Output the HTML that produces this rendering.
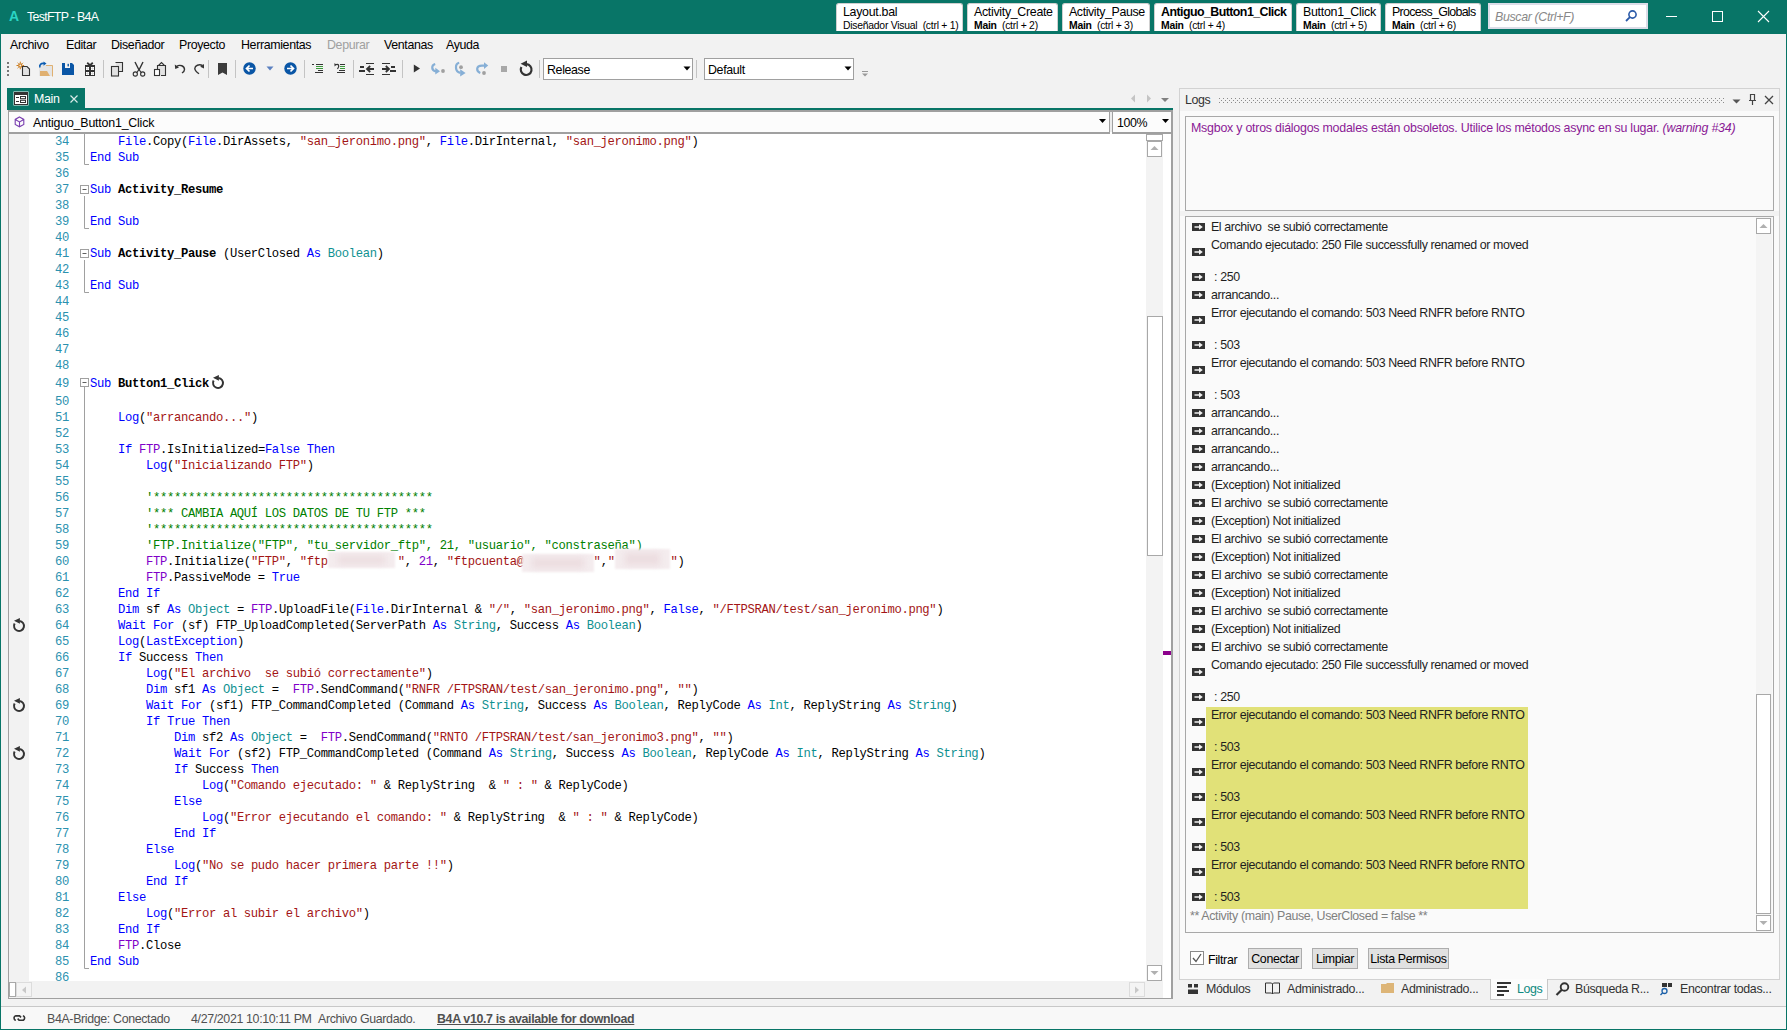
<!DOCTYPE html><html><head><meta charset="utf-8"><style>
*{box-sizing:border-box}
html,body{margin:0;padding:0}
body{width:1787px;height:1030px;overflow:hidden;position:relative;background:#f2f2f2;font-family:"Liberation Sans",sans-serif;font-size:12.4px;letter-spacing:-0.35px;color:#000}
.a{position:absolute}
.ln{position:absolute;left:29px;width:40px;text-align:right;font-family:"Liberation Mono",monospace;font-size:12.2px;letter-spacing:-0.32px;color:#2b91af;white-space:pre}
.cl{position:absolute;left:90px;font-family:"Liberation Mono",monospace;font-size:12.2px;letter-spacing:-0.32px;color:#000;white-space:pre}
i{font-style:normal}
.k{color:#0000ff} .t{color:#0f9191} .s{color:#a31515} .c{color:#008000} .o{color:#8000c8} .b{font-weight:bold}
.tt{position:absolute;background:#fff;border:1px solid #cfcfcf;border-bottom:none;border-radius:3px 3px 0 0;top:3px;height:28px;padding:0 0 0 6px;white-space:pre}
.tt .n{position:absolute;left:6px;top:1px;line-height:14px}
.tt .d{position:absolute;left:6px;top:16px;font-size:10.4px;letter-spacing:-0.25px;line-height:12px}
.mi{position:absolute;top:38px;line-height:15px}
.sep{position:absolute;top:60px;width:1px;height:20px;background:#c8c8c8}
</style></head><body>
<div class="a" style="left:0;top:0;width:1787px;height:34px;background:#087567"></div>
<div class="a" style="left:0;top:0;width:1px;height:1030px;background:#087567"></div>
<div class="a" style="left:1786px;top:0;width:1px;height:1030px;background:#087567"></div>
<div class="a" style="left:0;top:1029px;width:1787px;height:1px;background:#087567"></div>
<div class="a" style="left:9px;top:8px;font-size:14px;font-weight:bold;color:#2ad4c4;line-height:16px">A</div>
<div class="a" style="left:27px;top:10px;letter-spacing:-0.7px;color:#fff;line-height:14px">TestFTP - B4A</div>
<div class="tt" style="left:836px;width:127px"><div class="n" style="letter-spacing:-0.29px">Layout.bal</div><div class="d">Diseñador Visual  (ctrl + 1)</div></div>
<div class="tt" style="left:967px;width:91px"><div class="n" style="letter-spacing:-0.31px">Activity_Create</div><div class="d"><b>Main</b>  (ctrl + 2)</div></div>
<div class="tt" style="left:1062px;width:88px"><div class="n" style="letter-spacing:-0.4px">Activity_Pause</div><div class="d"><b>Main</b>  (ctrl + 3)</div></div>
<div class="tt" style="left:1154px;width:138px"><div class="n" style="font-weight:bold;letter-spacing:-0.55px">Antiguo_Button1_Click</div><div class="d"><b>Main</b>  (ctrl + 4)</div></div>
<div class="tt" style="left:1296px;width:85px"><div class="n" style="letter-spacing:-0.28px">Button1_Click</div><div class="d"><b>Main</b>  (ctrl + 5)</div></div>
<div class="tt" style="left:1385px;width:96px"><div class="n" style="letter-spacing:-0.68px">Process_Globals</div><div class="d"><b>Main</b>  (ctrl + 6)</div></div>
<div class="a" style="left:1488px;top:3px;width:160px;height:26px;background:#fff;border:2px solid #dcdde8"></div>
<div class="a" style="left:1495px;top:10px;font-style:italic;color:#888;line-height:14px">Buscar (Ctrl+F)</div>
<svg class="a" style="left:1624px;top:9px" width="14" height="14" viewBox="0 0 14 14"><circle cx="8.5" cy="5.5" r="3.6" fill="none" stroke="#2b5aa8" stroke-width="1.6"/><line x1="5.9" y1="8.1" x2="2" y2="12" stroke="#2b5aa8" stroke-width="1.8"/></svg>
<div class="a" style="left:1666px;top:16px;width:11px;height:1px;background:#fff"></div>
<div class="a" style="left:1712px;top:11px;width:11px;height:11px;border:1px solid #fff"></div>
<svg class="a" style="left:1757px;top:10px" width="13" height="13" viewBox="0 0 13 13"><path d="M1 1L12 12M12 1L1 12" stroke="#fff" stroke-width="1.1"/></svg>
<div class="mi" style="left:10px;color:#000">Archivo</div>
<div class="mi" style="left:66px;color:#000">Editar</div>
<div class="mi" style="left:111px;color:#000">Diseñador</div>
<div class="mi" style="left:179px;color:#000">Proyecto</div>
<div class="mi" style="left:241px;color:#000">Herramientas</div>
<div class="mi" style="left:327px;color:#a0a0a0">Depurar</div>
<div class="mi" style="left:384px;color:#000">Ventanas</div>
<div class="mi" style="left:446px;color:#000">Ayuda</div>
<svg class="a" style="left:7px;top:62px" width="2" height="14" viewBox="0 0 2 14"><rect x="0" y="0" width="2" height="2" fill="#777"/><rect x="0" y="4" width="2" height="2" fill="#777"/><rect x="0" y="8" width="2" height="2" fill="#777"/><rect x="0" y="12" width="2" height="2" fill="#777"/></svg>
<div class="a" style="left:103px;top:60px;width:1px;height:18px;background:#c4c4c4"></div>
<div class="a" style="left:208px;top:60px;width:1px;height:18px;background:#c4c4c4"></div>
<div class="a" style="left:235px;top:60px;width:1px;height:18px;background:#c4c4c4"></div>
<div class="a" style="left:304px;top:60px;width:1px;height:18px;background:#c4c4c4"></div>
<div class="a" style="left:353px;top:60px;width:1px;height:18px;background:#c4c4c4"></div>
<div class="a" style="left:402px;top:60px;width:1px;height:18px;background:#c4c4c4"></div>
<div class="a" style="left:539px;top:60px;width:1px;height:18px;background:#c4c4c4"></div>
<div class="a" style="left:696px;top:60px;width:1px;height:18px;background:#c4c4c4"></div>
<svg class="a" style="left:16px;top:58px" width="16" height="18" viewBox="0 0 16 18"><g transform="translate(0.3,3.5)"><circle cx="4" cy="4" r="1.6" fill="none" stroke="#cc7a1a" stroke-width="1.2"/><line x1="6.3" y1="4.0" x2="7.8" y2="4.0" stroke="#cc7a1a" stroke-width="1"/><line x1="1.7000000000000002" y1="4.0" x2="0.20000000000000018" y2="4.0" stroke="#cc7a1a" stroke-width="1"/><line x1="4.0" y1="6.3" x2="4.0" y2="7.8" stroke="#cc7a1a" stroke-width="1"/><line x1="4.0" y1="1.7000000000000002" x2="4.0" y2="0.20000000000000018" stroke="#cc7a1a" stroke-width="1"/><line x1="5.609999999999999" y1="5.609999999999999" x2="6.66" y2="6.66" stroke="#cc7a1a" stroke-width="1"/><line x1="2.39" y1="5.609999999999999" x2="1.3400000000000003" y2="6.66" stroke="#cc7a1a" stroke-width="1"/><line x1="5.609999999999999" y1="2.39" x2="6.66" y2="1.3400000000000003" stroke="#cc7a1a" stroke-width="1"/><line x1="2.39" y1="2.39" x2="1.3400000000000003" y2="1.3400000000000003" stroke="#cc7a1a" stroke-width="1"/></g><g transform="translate(16,0)"></g><path d="M6.5 8.5H11L13.5 11V17.5H6.5Z" fill="#e2e2e2" stroke="#333" stroke-width="1.1"/></svg>
<svg class="a" style="left:38px;top:61px" width="16" height="16" viewBox="0 0 16 16"><rect x="1" y="4" width="14" height="11" fill="#e4e4e4"/><path d="M8 4.5H14.5V15.5" fill="none" stroke="#e0b070" stroke-width="1"/><path d="M2 10H9L12 15H2Z" fill="#e0b070"/><path d="M2 6.5C1 4 3 2 6 2.5" fill="none" stroke="#0a5bb0" stroke-width="1.6"/><path d="M5.5 0.5L8.5 2.5L5.5 4.8Z" fill="#0a5bb0"/></svg>
<svg class="a" style="left:62px;top:63px" width="12" height="12" viewBox="0 0 12 12"><path d="M0 0H10L12 2V12H0Z" fill="#0a56a6"/><rect x="3" y="0" width="5" height="5" fill="#f4f4f4"/><rect x="5.5" y="0.8" width="1.4" height="2.6" fill="#0a56a6"/></svg>
<svg class="a" style="left:85px;top:62px" width="10" height="14" viewBox="0 0 10 14"><path d="M2.2 0.8L5 3.2L7.8 0.8" fill="none" stroke="#333" stroke-width="1.8"/><rect x="0" y="3" width="10" height="11" fill="#333"/><rect x="1" y="5" width="3" height="3" fill="#fff"/><rect x="6" y="5" width="3" height="3" fill="#fff"/><rect x="1" y="10" width="3" height="3" fill="#fff"/><rect x="6" y="10" width="3" height="3" fill="#fff"/><path d="M1 6.5H4M2.5 5V8M6 6.5H9M7.5 5V8M1 11.5H4M2.5 10V13M6 11.5H9M7.5 10V13" stroke="#ccc" stroke-width="0.6"/></svg>
<svg class="a" style="left:110px;top:61px" width="15" height="16" viewBox="0 0 15 16"><path d="M5.5 1.5H12.5V10.5H8" fill="#e2e2e2" stroke="#333" stroke-width="1.1"/><rect x="1.5" y="5.5" width="7" height="9.5" fill="#e2e2e2" stroke="#333" stroke-width="1.1"/></svg>
<svg class="a" style="left:132px;top:61px" width="14" height="16" viewBox="0 0 14 16"><path d="M3 1L7 9L11 1" fill="none" stroke="#333" stroke-width="1.4"/><path d="M4.5 12L7 8.5L9.5 12" fill="none" stroke="#333" stroke-width="1.1"/><circle cx="3.3" cy="13" r="2.1" fill="none" stroke="#333" stroke-width="1.1"/><circle cx="10.7" cy="13" r="2.1" fill="none" stroke="#333" stroke-width="1.1"/></svg>
<svg class="a" style="left:153px;top:61px" width="14" height="16" viewBox="0 0 14 16"><path d="M4.5 13.5V4.5H12.5V14.5H8" fill="#e2e2e2" stroke="#333" stroke-width="1.1"/><path d="M5.5 4.5L8.5 1.5L11.5 4.5" fill="none" stroke="#333" stroke-width="1.1"/><rect x="1.5" y="8.5" width="5" height="6" fill="#fff" stroke="#333" stroke-width="1.1"/></svg>
<svg class="a" style="left:174px;top:63px" width="12" height="11" viewBox="0 0 12 11"><path d="M2.5 3.5C6 1 10.5 3 10.5 6.5C10.5 8 9.5 9 8 10" fill="none" stroke="#333" stroke-width="1.4"/><path d="M0.8 1.5L1.2 6L5 4.5Z" fill="#333"/></svg>
<svg class="a" style="left:193px;top:63px" width="12" height="12" viewBox="0 0 12 12"><path d="M9.5 2.5C6 0.8 2 2.5 1.8 5.5C1.8 7.5 3.5 9 6 10.8" fill="none" stroke="#333" stroke-width="1.4"/><path d="M11 1L11 5.5L7.2 3.8Z" fill="#333"/></svg>
<svg class="a" style="left:218px;top:63px" width="9" height="13" viewBox="0 0 9 13"><path d="M0 0H9V12L4.5 9.5L0 12Z" fill="#3c3c3c"/></svg>
<svg class="a" style="left:243px;top:62px" width="13" height="13" viewBox="0 0 13 13"><circle cx="6.5" cy="6.5" r="6.2" fill="#0a56a6"/><path d="M10 6.5H4 M6.5 3.5L3.5 6.5L6.5 9.5" fill="none" stroke="#fff" stroke-width="1.7"/></svg>
<svg class="a" style="left:266px;top:66px" width="8" height="5" viewBox="0 0 8 5"><path d="M0.5 0.5H7.5L4 4.5Z" fill="#5b80c0"/></svg>
<svg class="a" style="left:284px;top:62px" width="13" height="13" viewBox="0 0 13 13"><circle cx="6.5" cy="6.5" r="6.2" fill="#0a56a6"/><path d="M3 6.5H9 M6.5 3.5L9.5 6.5L6.5 9.5" fill="none" stroke="#fff" stroke-width="1.7"/></svg>
<svg class="a" style="left:312px;top:63px" width="12" height="11" viewBox="0 0 12 11"><rect x="0" y="1" width="2" height="1" fill="#333"/><rect x="4" y="1" width="7" height="1" fill="#333"/><rect x="4" y="3" width="7" height="1" fill="#3a9a3a"/><rect x="4" y="5" width="7" height="1" fill="#3a9a3a"/><rect x="6" y="7" width="5" height="1" fill="#333"/><rect x="3" y="9" width="8" height="1" fill="#333"/></svg>
<svg class="a" style="left:334px;top:63px" width="12" height="11" viewBox="0 0 12 11"><path d="M1.5 1.8C4.5 0.5 6 2.5 3.5 6" fill="none" stroke="#333" stroke-width="1.2"/><path d="M0.3 0.3L0.6 3.4L2.8 1.5Z" fill="#333"/><rect x="6" y="1" width="5" height="1" fill="#333"/><rect x="6" y="3" width="5" height="1" fill="#3a9a3a"/><rect x="6" y="5" width="5" height="1" fill="#3a9a3a"/><rect x="5" y="7" width="6" height="1" fill="#333"/><rect x="3" y="9" width="8" height="1" fill="#333"/></svg>
<svg class="a" style="left:359px;top:62px" width="16" height="14" viewBox="0 0 16 14"><rect x="7" y="1" width="8" height="1" fill="#333"/><rect x="1" y="4" width="4" height="2" fill="#333"/><rect x="0" y="8" width="6" height="2" fill="#333"/><path d="M15 7H8.5 M11.2 4L8 7L11.2 10" fill="none" stroke="#333" stroke-width="1.8"/><rect x="7" y="12" width="8" height="1" fill="#333"/></svg>
<svg class="a" style="left:381px;top:62px" width="16" height="14" viewBox="0 0 16 14"><rect x="1" y="1" width="8" height="1" fill="#333"/><rect x="10" y="4" width="4" height="2" fill="#333"/><rect x="9" y="8" width="6" height="2" fill="#333"/><path d="M1 7H7.5 M4.8 4L8 7L4.8 10" fill="none" stroke="#333" stroke-width="1.8"/><rect x="1" y="12" width="8" height="1" fill="#333"/></svg>
<svg class="a" style="left:413px;top:64px" width="8" height="9" viewBox="0 0 8 9"><path d="M0.8 0.5L7 4.5L0.8 8.5Z" fill="#333"/></svg>
<svg class="a" style="left:430px;top:62px" width="16" height="14" viewBox="0 0 16 14"><path d="M5.2 2C1.2 3.2 1 8.8 6.2 9.3" fill="none" stroke="#86afd6" stroke-width="2.2"/><path d="M5.3 5.8L10 9.2L5.3 12.6Z" fill="#86afd6"/><circle cx="13" cy="9" r="1.9" fill="#a0a0a0"/></svg>
<svg class="a" style="left:454px;top:61px" width="14" height="17" viewBox="0 0 14 17"><path d="M5.2 1.8C0.8 2.8 0.6 11 6.5 11.8" fill="none" stroke="#86afd6" stroke-width="2.2"/><path d="M6.2 8.3L11.6 11.9L6.2 15.5Z" fill="#86afd6"/><circle cx="7" cy="6.2" r="1.9" fill="#a0a0a0"/></svg>
<svg class="a" style="left:475px;top:62px" width="15" height="14" viewBox="0 0 15 14"><path d="M5.3 11C1 9.5 0.8 3.6 7 3.6H9.5" fill="none" stroke="#86afd6" stroke-width="2.2"/><path d="M9 0.2L13.2 3.6L9 7Z" fill="#86afd6"/><circle cx="9" cy="11" r="1.9" fill="#a0a0a0"/></svg>
<div class="a" style="left:501px;top:66px;width:6px;height:6px;background:#a8a8a8"></div>
<svg class="a" style="left:518px;top:60px" width="16" height="17" viewBox="0 0 16 17"><path d="M3.4 7A5.4 5.4 0 1 0 8.5 4.2" fill="none" stroke="#333" stroke-width="2.2"/><path d="M2.6 3.8L9 0.6L9 7Z" fill="#333"/></svg>
<div class="a" style="left:543px;top:58px;width:150px;height:22px;background:#fff;border:1px solid #a0a0a0"></div>
<div class="a" style="left:547px;top:63px;line-height:14px">Release</div>
<svg class="a" style="left:683px;top:66px" width="8" height="5" viewBox="0 0 8 5"><path d="M0.5 0.5H7.5L4 4.5Z" fill="#000"/></svg>
<div class="a" style="left:704px;top:58px;width:150px;height:22px;background:#fff;border:1px solid #a0a0a0"></div>
<div class="a" style="left:708px;top:63px;line-height:14px">Default</div>
<svg class="a" style="left:844px;top:66px" width="8" height="5" viewBox="0 0 8 5"><path d="M0.5 0.5H7.5L4 4.5Z" fill="#000"/></svg>
<svg class="a" style="left:861px;top:71px" width="8" height="6" viewBox="0 0 8 6"><rect x="1" y="0" width="6" height="1" fill="#999"/><path d="M1 2.5H7L4 5.5Z" fill="#999"/></svg>
<div class="a" style="left:7px;top:88px;width:78px;height:20px;background:#087567"></div>
<svg class="a" style="left:13px;top:91px" width="16" height="15" viewBox="0 0 16 15"><rect x="0.5" y="0.5" width="15" height="14" fill="#fff"/><rect x="1.5" y="1.5" width="13" height="12" fill="#fff" stroke="#333" stroke-width="1"/><rect x="2" y="2" width="12" height="2" fill="#333"/><rect x="3" y="6" width="3" height="1" fill="#333"/><rect x="3" y="10" width="3" height="1" fill="#333"/><rect x="7.5" y="5.5" width="5" height="2.2" fill="none" stroke="#333" stroke-width="1"/><rect x="7.5" y="9.3" width="5" height="2.2" fill="none" stroke="#333" stroke-width="1"/></svg>
<div class="a" style="left:34px;top:92px;color:#fff;line-height:15px">Main</div>
<svg class="a" style="left:70px;top:95px" width="8" height="8" viewBox="0 0 8 8"><path d="M0.5 0.5L7.5 7.5M7.5 0.5L0.5 7.5" stroke="#d8ebe8" stroke-width="1.2"/></svg>
<div class="a" style="left:7px;top:108px;width:1166px;height:2px;background:#087567"></div>
<svg class="a" style="left:1128px;top:93px" width="46" height="12" viewBox="0 0 46 12"><path d="M7 1.5L3 5.5L7 9.5Z" fill="#c4c4c4"/><path d="M19 1.5L23 5.5L19 9.5Z" fill="#c4c4c4"/><path d="M33 5L41 5L37 9Z" fill="#808080"/></svg>
<div class="a" style="left:8px;top:110px;width:1165px;height:889px;border:1px solid #a0a0a0;border-right-width:2px;border-top-width:2px;background:#fff"></div>
<div class="a" style="left:9px;top:112px;width:1101px;height:22px;background:#fcfcfc;border-bottom:2px solid #a0a0a0;border-right:1px solid #a0a0a0"></div>
<div class="a" style="left:1110px;top:112px;width:2px;height:20px;background:#ececec"></div>
<div class="a" style="left:1112px;top:112px;width:59px;height:22px;background:#fcfcfc;border-left:1px solid #a0a0a0;border-bottom:2px solid #a0a0a0"></div>
<svg class="a" style="left:14px;top:116px" width="12" height="12" viewBox="0 0 12 12"><path d="M5.5 1L9.8 3.4L9.8 8.4L5.5 10.8L1.2 8.4L1.2 3.4Z M1.2 3.4L5.5 5.9L9.8 3.4 M5.5 5.9L5.5 10.8" fill="none" stroke="#7a3fb0" stroke-width="1.1"/></svg>
<div class="a" style="left:33px;top:115.5px;letter-spacing:-0.2px;line-height:15px">Antiguo_Button1_Click</div>
<svg class="a" style="left:1099px;top:119px" width="8" height="5" viewBox="0 0 8 5"><path d="M0 0H7L3.5 4Z" fill="#000"/></svg>
<div class="a" style="left:1117px;top:116px;line-height:14px">100%</div>
<svg class="a" style="left:1162px;top:119px" width="8" height="5" viewBox="0 0 8 5"><path d="M0 0H7L3.5 4Z" fill="#000"/></svg>
<div class="a" style="left:9px;top:134px;width:20px;height:847px;background:#f2f2f2"></div>
<div class="a" style="left:1146px;top:134px;width:17px;height:847px;background:#f3f3f3"></div>
<div class="a" style="left:1146px;top:134px;width:17px;height:7px;background:#fff;border:1px solid #a8a8a8"></div>
<div class="a" style="left:1147px;top:141px;width:15px;height:16px;background:#fff;border:1px solid #a8a8a8"></div>
<svg class="a" style="left:1150px;top:145px" width="9" height="6" viewBox="0 0 9 6"><path d="M0.5 5H8.5L4.5 1Z" fill="#b0b0b0"/></svg>
<div class="a" style="left:1147px;top:316px;width:16px;height:240px;background:#fff;border:1px solid #a8a8a8"></div>
<div class="a" style="left:1147px;top:965px;width:15px;height:16px;background:#fff;border:1px solid #a8a8a8"></div>
<svg class="a" style="left:1150px;top:970px" width="9" height="6" viewBox="0 0 9 6"><path d="M0.5 1H8.5L4.5 5Z" fill="#b0b0b0"/></svg>
<div class="a" style="left:1163px;top:651px;width:8px;height:4px;background:#8b008b"></div>
<div class="a" style="left:9px;top:981px;width:1154px;height:17px;background:#f2f2f2"></div>
<div class="a" style="left:9px;top:982px;width:7px;height:15px;background:#fff;border:1px solid #a8a8a8"></div>
<div class="a" style="left:16px;top:982px;width:16px;height:15px;background:#f4f4f4;border:1px solid #dcdcdc"></div>
<svg class="a" style="left:21px;top:986px" width="6" height="8" viewBox="0 0 6 8"><path d="M5 0.5V7.5L1 4Z" fill="#c8c8c8"/></svg>
<div class="a" style="left:1129px;top:982px;width:16px;height:15px;background:#f4f4f4;border:1px solid #dcdcdc"></div>
<svg class="a" style="left:1134px;top:986px" width="6" height="8" viewBox="0 0 6 8"><path d="M1 0.5V7.5L5 4Z" fill="#c8c8c8"/></svg>
<svg class="a" style="left:78px;top:133px" width="14" height="848" viewBox="0 0 14 848">



<path d="M6.5 0V31.5H11" fill="none" stroke="#a0a0a0" stroke-width="1"/><path d="M6.5 63V95.5H11" fill="none" stroke="#a0a0a0" stroke-width="1"/><path d="M6.5 127V159.5H11" fill="none" stroke="#a0a0a0" stroke-width="1"/><path d="M6.5 254V835.5H11" fill="none" stroke="#a0a0a0" stroke-width="1"/><rect x="2.5" y="52.5" width="8" height="8" fill="#fff" stroke="#a0a0a0"/><path d="M4.5 56.5H8.5" stroke="#606060"/><rect x="2.5" y="116.5" width="8" height="8" fill="#fff" stroke="#a0a0a0"/><path d="M4.5 120.5H8.5" stroke="#606060"/><rect x="2.5" y="245.5" width="8" height="8" fill="#fff" stroke="#a0a0a0"/><path d="M4.5 249.5H8.5" stroke="#606060"/></svg>
<div class="ln" style="top:134px;height:16px;line-height:16px">34</div>
<div class="cl" style="top:134px;height:16px;line-height:16px">    <i class="k">File</i>.Copy(<i class="k">File</i>.DirAssets, <i class="s">"san_jeronimo.png"</i>, <i class="k">File</i>.DirInternal, <i class="s">"san_jeronimo.png"</i>)</div>
<div class="ln" style="top:150px;height:16px;line-height:16px">35</div>
<div class="cl" style="top:150px;height:16px;line-height:16px"><i class="k">End</i> <i class="k">Sub</i></div>
<div class="ln" style="top:166px;height:16px;line-height:16px">36</div>
<div class="cl" style="top:166px;height:16px;line-height:16px"></div>
<div class="ln" style="top:182px;height:16px;line-height:16px">37</div>
<div class="cl" style="top:182px;height:16px;line-height:16px"><i class="k">Sub</i> <i class="b">Activity_Resume</i></div>
<div class="ln" style="top:198px;height:16px;line-height:16px">38</div>
<div class="cl" style="top:198px;height:16px;line-height:16px"></div>
<div class="ln" style="top:214px;height:16px;line-height:16px">39</div>
<div class="cl" style="top:214px;height:16px;line-height:16px"><i class="k">End</i> <i class="k">Sub</i></div>
<div class="ln" style="top:230px;height:16px;line-height:16px">40</div>
<div class="cl" style="top:230px;height:16px;line-height:16px"></div>
<div class="ln" style="top:246px;height:16px;line-height:16px">41</div>
<div class="cl" style="top:246px;height:16px;line-height:16px"><i class="k">Sub</i> <i class="b">Activity_Pause</i> (UserClosed <i class="k">As</i> <i class="t">Boolean</i>)</div>
<div class="ln" style="top:262px;height:16px;line-height:16px">42</div>
<div class="cl" style="top:262px;height:16px;line-height:16px"></div>
<div class="ln" style="top:278px;height:16px;line-height:16px">43</div>
<div class="cl" style="top:278px;height:16px;line-height:16px"><i class="k">End</i> <i class="k">Sub</i></div>
<div class="ln" style="top:294px;height:16px;line-height:16px">44</div>
<div class="cl" style="top:294px;height:16px;line-height:16px"></div>
<div class="ln" style="top:310px;height:16px;line-height:16px">45</div>
<div class="cl" style="top:310px;height:16px;line-height:16px"></div>
<div class="ln" style="top:326px;height:16px;line-height:16px">46</div>
<div class="cl" style="top:326px;height:16px;line-height:16px"></div>
<div class="ln" style="top:342px;height:16px;line-height:16px">47</div>
<div class="cl" style="top:342px;height:16px;line-height:16px"></div>
<div class="ln" style="top:358px;height:16px;line-height:16px">48</div>
<div class="cl" style="top:358px;height:16px;line-height:16px"></div>
<div class="ln" style="top:374px;height:20px;line-height:20px">49</div>
<div class="cl" style="top:374px;height:20px;line-height:20px"><i class="k">Sub</i> <i class="b">Button1_Click</i></div>
<div class="ln" style="top:394px;height:16px;line-height:16px">50</div>
<div class="cl" style="top:394px;height:16px;line-height:16px"></div>
<div class="ln" style="top:410px;height:16px;line-height:16px">51</div>
<div class="cl" style="top:410px;height:16px;line-height:16px">    <i class="k">Log</i>(<i class="s">"arrancando..."</i>)</div>
<div class="ln" style="top:426px;height:16px;line-height:16px">52</div>
<div class="cl" style="top:426px;height:16px;line-height:16px"></div>
<div class="ln" style="top:442px;height:16px;line-height:16px">53</div>
<div class="cl" style="top:442px;height:16px;line-height:16px">    <i class="k">If</i> <i class="o">FTP</i>.IsInitialized=<i class="k">False</i> <i class="k">Then</i></div>
<div class="ln" style="top:458px;height:16px;line-height:16px">54</div>
<div class="cl" style="top:458px;height:16px;line-height:16px">        <i class="k">Log</i>(<i class="s">"Inicializando FTP"</i>)</div>
<div class="ln" style="top:474px;height:16px;line-height:16px">55</div>
<div class="cl" style="top:474px;height:16px;line-height:16px"></div>
<div class="ln" style="top:490px;height:16px;line-height:16px">56</div>
<div class="cl" style="top:490px;height:16px;line-height:16px">        <i class="c">'****************************************</i></div>
<div class="ln" style="top:506px;height:16px;line-height:16px">57</div>
<div class="cl" style="top:506px;height:16px;line-height:16px">        <i class="c">'*** CAMBIA AQUÍ LOS DATOS DE TU FTP ***</i></div>
<div class="ln" style="top:522px;height:16px;line-height:16px">58</div>
<div class="cl" style="top:522px;height:16px;line-height:16px">        <i class="c">'****************************************</i></div>
<div class="ln" style="top:538px;height:16px;line-height:16px">59</div>
<div class="cl" style="top:538px;height:16px;line-height:16px">        <i class="c">'FTP.Initialize("FTP", "tu_servidor_ftp", 21, "usuario", "constraseña")</i></div>
<div class="ln" style="top:554px;height:16px;line-height:16px">60</div>
<div class="cl" style="top:554px;height:16px;line-height:16px">        <i class="o">FTP</i>.Initialize(<i class="s">"FTP"</i>, <i class="s">"ftp          "</i>, <i class="o">21</i>, <i class="s">"ftpcuenta@          "</i>,<i class="s">"        "</i>)</div>
<div class="ln" style="top:570px;height:16px;line-height:16px">61</div>
<div class="cl" style="top:570px;height:16px;line-height:16px">        <i class="o">FTP</i>.PassiveMode = <i class="k">True</i></div>
<div class="ln" style="top:586px;height:16px;line-height:16px">62</div>
<div class="cl" style="top:586px;height:16px;line-height:16px">    <i class="k">End</i> <i class="k">If</i></div>
<div class="ln" style="top:602px;height:16px;line-height:16px">63</div>
<div class="cl" style="top:602px;height:16px;line-height:16px">    <i class="k">Dim</i> sf <i class="k">As</i> <i class="t">Object</i> = <i class="o">FTP</i>.UploadFile(<i class="k">File</i>.DirInternal &amp; <i class="s">"/"</i>, <i class="s">"san_jeronimo.png"</i>, <i class="k">False</i>, <i class="s">"/FTPSRAN/test/san_jeronimo.png"</i>)</div>
<div class="ln" style="top:618px;height:16px;line-height:16px">64</div>
<div class="cl" style="top:618px;height:16px;line-height:16px">    <i class="k">Wait</i> <i class="k">For</i> (sf) FTP_UploadCompleted(ServerPath <i class="k">As</i> <i class="t">String</i>, Success <i class="k">As</i> <i class="t">Boolean</i>)</div>
<div class="ln" style="top:634px;height:16px;line-height:16px">65</div>
<div class="cl" style="top:634px;height:16px;line-height:16px">    <i class="k">Log</i>(<i class="k">LastException</i>)</div>
<div class="ln" style="top:650px;height:16px;line-height:16px">66</div>
<div class="cl" style="top:650px;height:16px;line-height:16px">    <i class="k">If</i> Success <i class="k">Then</i></div>
<div class="ln" style="top:666px;height:16px;line-height:16px">67</div>
<div class="cl" style="top:666px;height:16px;line-height:16px">        <i class="k">Log</i>(<i class="s">"El archivo  se subió correctamente"</i>)</div>
<div class="ln" style="top:682px;height:16px;line-height:16px">68</div>
<div class="cl" style="top:682px;height:16px;line-height:16px">        <i class="k">Dim</i> sf1 <i class="k">As</i> <i class="t">Object</i> =  <i class="o">FTP</i>.SendCommand(<i class="s">"RNFR /FTPSRAN/test/san_jeronimo.png"</i>, <i class="s">""</i>)</div>
<div class="ln" style="top:698px;height:16px;line-height:16px">69</div>
<div class="cl" style="top:698px;height:16px;line-height:16px">        <i class="k">Wait</i> <i class="k">For</i> (sf1) FTP_CommandCompleted (Command <i class="k">As</i> <i class="t">String</i>, Success <i class="k">As</i> <i class="t">Boolean</i>, ReplyCode <i class="k">As</i> <i class="t">Int</i>, ReplyString <i class="k">As</i> <i class="t">String</i>)</div>
<div class="ln" style="top:714px;height:16px;line-height:16px">70</div>
<div class="cl" style="top:714px;height:16px;line-height:16px">        <i class="k">If</i> <i class="k">True</i> <i class="k">Then</i></div>
<div class="ln" style="top:730px;height:16px;line-height:16px">71</div>
<div class="cl" style="top:730px;height:16px;line-height:16px">            <i class="k">Dim</i> sf2 <i class="k">As</i> <i class="t">Object</i> =  <i class="o">FTP</i>.SendCommand(<i class="s">"RNTO /FTPSRAN/test/san_jeronimo3.png"</i>, <i class="s">""</i>)</div>
<div class="ln" style="top:746px;height:16px;line-height:16px">72</div>
<div class="cl" style="top:746px;height:16px;line-height:16px">            <i class="k">Wait</i> <i class="k">For</i> (sf2) FTP_CommandCompleted (Command <i class="k">As</i> <i class="t">String</i>, Success <i class="k">As</i> <i class="t">Boolean</i>, ReplyCode <i class="k">As</i> <i class="t">Int</i>, ReplyString <i class="k">As</i> <i class="t">String</i>)</div>
<div class="ln" style="top:762px;height:16px;line-height:16px">73</div>
<div class="cl" style="top:762px;height:16px;line-height:16px">            <i class="k">If</i> Success <i class="k">Then</i></div>
<div class="ln" style="top:778px;height:16px;line-height:16px">74</div>
<div class="cl" style="top:778px;height:16px;line-height:16px">                <i class="k">Log</i>(<i class="s">"Comando ejecutado: "</i> &amp; ReplyString  &amp; <i class="s">" : "</i> &amp; ReplyCode)</div>
<div class="ln" style="top:794px;height:16px;line-height:16px">75</div>
<div class="cl" style="top:794px;height:16px;line-height:16px">            <i class="k">Else</i></div>
<div class="ln" style="top:810px;height:16px;line-height:16px">76</div>
<div class="cl" style="top:810px;height:16px;line-height:16px">                <i class="k">Log</i>(<i class="s">"Error ejecutando el comando: "</i> &amp; ReplyString  &amp; <i class="s">" : "</i> &amp; ReplyCode)</div>
<div class="ln" style="top:826px;height:16px;line-height:16px">77</div>
<div class="cl" style="top:826px;height:16px;line-height:16px">            <i class="k">End</i> <i class="k">If</i></div>
<div class="ln" style="top:842px;height:16px;line-height:16px">78</div>
<div class="cl" style="top:842px;height:16px;line-height:16px">        <i class="k">Else</i></div>
<div class="ln" style="top:858px;height:16px;line-height:16px">79</div>
<div class="cl" style="top:858px;height:16px;line-height:16px">            <i class="k">Log</i>(<i class="s">"No se pudo hacer primera parte !!"</i>)</div>
<div class="ln" style="top:874px;height:16px;line-height:16px">80</div>
<div class="cl" style="top:874px;height:16px;line-height:16px">        <i class="k">End</i> <i class="k">If</i></div>
<div class="ln" style="top:890px;height:16px;line-height:16px">81</div>
<div class="cl" style="top:890px;height:16px;line-height:16px">    <i class="k">Else</i></div>
<div class="ln" style="top:906px;height:16px;line-height:16px">82</div>
<div class="cl" style="top:906px;height:16px;line-height:16px">        <i class="k">Log</i>(<i class="s">"Error al subir el archivo"</i>)</div>
<div class="ln" style="top:922px;height:16px;line-height:16px">83</div>
<div class="cl" style="top:922px;height:16px;line-height:16px">    <i class="k">End</i> <i class="k">If</i></div>
<div class="ln" style="top:938px;height:16px;line-height:16px">84</div>
<div class="cl" style="top:938px;height:16px;line-height:16px">    <i class="o">FTP</i>.Close</div>
<div class="ln" style="top:954px;height:16px;line-height:16px">85</div>
<div class="cl" style="top:954px;height:16px;line-height:16px"><i class="k">End</i> <i class="k">Sub</i></div>
<div class="ln" style="top:970px;height:16px;line-height:16px">86</div>
<div class="cl" style="top:970px;height:16px;line-height:16px"></div>
<div class="a" style="left:328px;top:552px;width:67px;height:16px;background:#f4ecee;filter:blur(1.2px)"></div>
<div class="a" style="left:338px;top:556px;width:47px;height:8px;background:#ecdde0;filter:blur(3px)"></div>
<div class="a" style="left:522px;top:554px;width:72px;height:18px;background:#f4ecee;filter:blur(1.2px)"></div>
<div class="a" style="left:532px;top:558px;width:52px;height:10px;background:#ecdde0;filter:blur(3px)"></div>
<div class="a" style="left:615px;top:549px;width:55px;height:20px;background:#f4ecee;filter:blur(1.2px)"></div>
<div class="a" style="left:625px;top:553px;width:35px;height:12px;background:#ecdde0;filter:blur(3px)"></div>
<svg class="a" style="left:210px;top:374px" width="16" height="16" viewBox="0 0 16 16"><path d="M3.6 6.6A5 5 0 1 0 8.4 4" fill="none" stroke="#333" stroke-width="2"/><path d="M3 3.8L8.9 0.9L8.9 6.8Z" fill="#333"/></svg>
<svg class="a" style="left:11px;top:617px" width="16" height="16" viewBox="0 0 16 16"><path d="M3.6 6.6A5 5 0 1 0 8.4 4" fill="none" stroke="#333" stroke-width="2"/><path d="M3 3.8L8.9 0.9L8.9 6.8Z" fill="#333"/></svg>
<svg class="a" style="left:11px;top:697px" width="16" height="16" viewBox="0 0 16 16"><path d="M3.6 6.6A5 5 0 1 0 8.4 4" fill="none" stroke="#333" stroke-width="2"/><path d="M3 3.8L8.9 0.9L8.9 6.8Z" fill="#333"/></svg>
<svg class="a" style="left:11px;top:745px" width="16" height="16" viewBox="0 0 16 16"><path d="M3.6 6.6A5 5 0 1 0 8.4 4" fill="none" stroke="#333" stroke-width="2"/><path d="M3 3.8L8.9 0.9L8.9 6.8Z" fill="#333"/></svg>
<div class="a" style="left:1179px;top:88px;width:601px;height:892px;border:1px solid #d2d2d2;background:#fafafa"></div>
<div class="a" style="left:1180px;top:89px;width:599px;height:22px;background:#f2f2f2"></div>
<div class="a" style="left:1185px;top:93px;line-height:14px;color:#333">Logs</div>
<svg class="a" style="left:1219px;top:98px" width="506" height="5" viewBox="0 0 506 5"><defs><pattern id="gp" width="4" height="4" patternUnits="userSpaceOnUse"><rect x="0" y="0" width="1" height="1" fill="#8c8c8c"/><rect x="2" y="2" width="1" height="1" fill="#8c8c8c"/></pattern></defs><rect width="506" height="5" fill="url(#gp)"/></svg>
<svg class="a" style="left:1732px;top:99px" width="10" height="6" viewBox="0 0 10 6"><path d="M0.5 0.5H8.5L4.5 4.5Z" fill="#555"/></svg>
<svg class="a" style="left:1748px;top:94px" width="9" height="12" viewBox="0 0 9 12"><path d="M2.5 0.5H6.5V6.5H2.5Z M1 6.5H8 M4.5 6.5V11" fill="none" stroke="#444" stroke-width="1.2"/></svg>
<svg class="a" style="left:1764px;top:95px" width="10" height="10" viewBox="0 0 10 10"><path d="M1 1L9 9M9 1L1 9" stroke="#444" stroke-width="1.3"/></svg>
<div class="a" style="left:1185px;top:116px;width:589px;height:95px;border:1px solid #a8a8a8;background:#fafafa"></div>
<div class="a" style="left:1191px;top:121px;line-height:14px;color:#8b1a96;white-space:pre;letter-spacing:-0.23px">Msgbox y otros diálogos modales están obsoletos. Utilice los métodos async en su lugar. <i style="font-style:italic">(warning #34)</i></div>
<div class="a" style="left:1180px;top:211px;width:599px;height:5px;background:#f2f2f2"></div>
<div class="a" style="left:1185px;top:216px;width:589px;height:717px;border:1px solid #a8a8a8;background:#fafafa"></div>
<div class="a" style="left:1756px;top:217px;width:16px;height:715px;background:#f4f4f4"></div>
<div class="a" style="left:1756px;top:218px;width:15px;height:16px;background:#fff;border:1px solid #a8a8a8"></div>
<svg class="a" style="left:1759px;top:223px" width="9" height="6" viewBox="0 0 9 6"><path d="M0.5 5H8.5L4.5 1Z" fill="#b0b0b0"/></svg>
<div class="a" style="left:1756px;top:694px;width:15px;height:220px;background:#fff;border:1px solid #a8a8a8"></div>
<div class="a" style="left:1756px;top:915px;width:15px;height:16px;background:#fff;border:1px solid #a8a8a8"></div>
<svg class="a" style="left:1759px;top:920px" width="9" height="6" viewBox="0 0 9 6"><path d="M0.5 1H8.5L4.5 5Z" fill="#b0b0b0"/></svg>
<div class="a" style="left:1206px;top:707px;width:322px;height:202px;background:#e1e178"></div>
<svg class="a" style="left:1192px;top:223px" width="13" height="8" viewBox="0 0 13 8"><rect x="0" y="0" width="13" height="8" fill="#333"/><path d="M2.5 3.2H7V1.2L10.8 4L7 6.8V4.8H2.5Z" fill="#f4f4f4"/></svg>
<div class="a" style="left:1211px;top:220px;line-height:14px;white-space:pre;color:#1e1e1e;letter-spacing:-0.39px">El archivo  se subió correctamente</div>
<svg class="a" style="left:1192px;top:248px" width="13" height="8" viewBox="0 0 13 8"><rect x="0" y="0" width="13" height="8" fill="#333"/><path d="M2.5 3.2H7V1.2L10.8 4L7 6.8V4.8H2.5Z" fill="#f4f4f4"/></svg>
<div class="a" style="left:1211px;top:238px;line-height:14px;white-space:pre;color:#1e1e1e;letter-spacing:-0.39px">Comando ejecutado: 250 File successfully renamed or moved</div>
<svg class="a" style="left:1192px;top:273px" width="13" height="8" viewBox="0 0 13 8"><rect x="0" y="0" width="13" height="8" fill="#333"/><path d="M2.5 3.2H7V1.2L10.8 4L7 6.8V4.8H2.5Z" fill="#f4f4f4"/></svg>
<div class="a" style="left:1211px;top:270px;line-height:14px;white-space:pre;color:#1e1e1e;letter-spacing:-0.39px"> : 250</div>
<svg class="a" style="left:1192px;top:291px" width="13" height="8" viewBox="0 0 13 8"><rect x="0" y="0" width="13" height="8" fill="#333"/><path d="M2.5 3.2H7V1.2L10.8 4L7 6.8V4.8H2.5Z" fill="#f4f4f4"/></svg>
<div class="a" style="left:1211px;top:288px;line-height:14px;white-space:pre;color:#1e1e1e;letter-spacing:-0.39px">arrancando...</div>
<svg class="a" style="left:1192px;top:316px" width="13" height="8" viewBox="0 0 13 8"><rect x="0" y="0" width="13" height="8" fill="#333"/><path d="M2.5 3.2H7V1.2L10.8 4L7 6.8V4.8H2.5Z" fill="#f4f4f4"/></svg>
<div class="a" style="left:1211px;top:306px;line-height:14px;white-space:pre;color:#1e1e1e;letter-spacing:-0.39px">Error ejecutando el comando: 503 Need RNFR before RNTO</div>
<svg class="a" style="left:1192px;top:341px" width="13" height="8" viewBox="0 0 13 8"><rect x="0" y="0" width="13" height="8" fill="#333"/><path d="M2.5 3.2H7V1.2L10.8 4L7 6.8V4.8H2.5Z" fill="#f4f4f4"/></svg>
<div class="a" style="left:1211px;top:338px;line-height:14px;white-space:pre;color:#1e1e1e;letter-spacing:-0.39px"> : 503</div>
<svg class="a" style="left:1192px;top:366px" width="13" height="8" viewBox="0 0 13 8"><rect x="0" y="0" width="13" height="8" fill="#333"/><path d="M2.5 3.2H7V1.2L10.8 4L7 6.8V4.8H2.5Z" fill="#f4f4f4"/></svg>
<div class="a" style="left:1211px;top:356px;line-height:14px;white-space:pre;color:#1e1e1e;letter-spacing:-0.39px">Error ejecutando el comando: 503 Need RNFR before RNTO</div>
<svg class="a" style="left:1192px;top:391px" width="13" height="8" viewBox="0 0 13 8"><rect x="0" y="0" width="13" height="8" fill="#333"/><path d="M2.5 3.2H7V1.2L10.8 4L7 6.8V4.8H2.5Z" fill="#f4f4f4"/></svg>
<div class="a" style="left:1211px;top:388px;line-height:14px;white-space:pre;color:#1e1e1e;letter-spacing:-0.39px"> : 503</div>
<svg class="a" style="left:1192px;top:409px" width="13" height="8" viewBox="0 0 13 8"><rect x="0" y="0" width="13" height="8" fill="#333"/><path d="M2.5 3.2H7V1.2L10.8 4L7 6.8V4.8H2.5Z" fill="#f4f4f4"/></svg>
<div class="a" style="left:1211px;top:406px;line-height:14px;white-space:pre;color:#1e1e1e;letter-spacing:-0.39px">arrancando...</div>
<svg class="a" style="left:1192px;top:427px" width="13" height="8" viewBox="0 0 13 8"><rect x="0" y="0" width="13" height="8" fill="#333"/><path d="M2.5 3.2H7V1.2L10.8 4L7 6.8V4.8H2.5Z" fill="#f4f4f4"/></svg>
<div class="a" style="left:1211px;top:424px;line-height:14px;white-space:pre;color:#1e1e1e;letter-spacing:-0.39px">arrancando...</div>
<svg class="a" style="left:1192px;top:445px" width="13" height="8" viewBox="0 0 13 8"><rect x="0" y="0" width="13" height="8" fill="#333"/><path d="M2.5 3.2H7V1.2L10.8 4L7 6.8V4.8H2.5Z" fill="#f4f4f4"/></svg>
<div class="a" style="left:1211px;top:442px;line-height:14px;white-space:pre;color:#1e1e1e;letter-spacing:-0.39px">arrancando...</div>
<svg class="a" style="left:1192px;top:463px" width="13" height="8" viewBox="0 0 13 8"><rect x="0" y="0" width="13" height="8" fill="#333"/><path d="M2.5 3.2H7V1.2L10.8 4L7 6.8V4.8H2.5Z" fill="#f4f4f4"/></svg>
<div class="a" style="left:1211px;top:460px;line-height:14px;white-space:pre;color:#1e1e1e;letter-spacing:-0.39px">arrancando...</div>
<svg class="a" style="left:1192px;top:481px" width="13" height="8" viewBox="0 0 13 8"><rect x="0" y="0" width="13" height="8" fill="#333"/><path d="M2.5 3.2H7V1.2L10.8 4L7 6.8V4.8H2.5Z" fill="#f4f4f4"/></svg>
<div class="a" style="left:1211px;top:478px;line-height:14px;white-space:pre;color:#1e1e1e;letter-spacing:-0.39px">(Exception) Not initialized</div>
<svg class="a" style="left:1192px;top:499px" width="13" height="8" viewBox="0 0 13 8"><rect x="0" y="0" width="13" height="8" fill="#333"/><path d="M2.5 3.2H7V1.2L10.8 4L7 6.8V4.8H2.5Z" fill="#f4f4f4"/></svg>
<div class="a" style="left:1211px;top:496px;line-height:14px;white-space:pre;color:#1e1e1e;letter-spacing:-0.39px">El archivo  se subió correctamente</div>
<svg class="a" style="left:1192px;top:517px" width="13" height="8" viewBox="0 0 13 8"><rect x="0" y="0" width="13" height="8" fill="#333"/><path d="M2.5 3.2H7V1.2L10.8 4L7 6.8V4.8H2.5Z" fill="#f4f4f4"/></svg>
<div class="a" style="left:1211px;top:514px;line-height:14px;white-space:pre;color:#1e1e1e;letter-spacing:-0.39px">(Exception) Not initialized</div>
<svg class="a" style="left:1192px;top:535px" width="13" height="8" viewBox="0 0 13 8"><rect x="0" y="0" width="13" height="8" fill="#333"/><path d="M2.5 3.2H7V1.2L10.8 4L7 6.8V4.8H2.5Z" fill="#f4f4f4"/></svg>
<div class="a" style="left:1211px;top:532px;line-height:14px;white-space:pre;color:#1e1e1e;letter-spacing:-0.39px">El archivo  se subió correctamente</div>
<svg class="a" style="left:1192px;top:553px" width="13" height="8" viewBox="0 0 13 8"><rect x="0" y="0" width="13" height="8" fill="#333"/><path d="M2.5 3.2H7V1.2L10.8 4L7 6.8V4.8H2.5Z" fill="#f4f4f4"/></svg>
<div class="a" style="left:1211px;top:550px;line-height:14px;white-space:pre;color:#1e1e1e;letter-spacing:-0.39px">(Exception) Not initialized</div>
<svg class="a" style="left:1192px;top:571px" width="13" height="8" viewBox="0 0 13 8"><rect x="0" y="0" width="13" height="8" fill="#333"/><path d="M2.5 3.2H7V1.2L10.8 4L7 6.8V4.8H2.5Z" fill="#f4f4f4"/></svg>
<div class="a" style="left:1211px;top:568px;line-height:14px;white-space:pre;color:#1e1e1e;letter-spacing:-0.39px">El archivo  se subió correctamente</div>
<svg class="a" style="left:1192px;top:589px" width="13" height="8" viewBox="0 0 13 8"><rect x="0" y="0" width="13" height="8" fill="#333"/><path d="M2.5 3.2H7V1.2L10.8 4L7 6.8V4.8H2.5Z" fill="#f4f4f4"/></svg>
<div class="a" style="left:1211px;top:586px;line-height:14px;white-space:pre;color:#1e1e1e;letter-spacing:-0.39px">(Exception) Not initialized</div>
<svg class="a" style="left:1192px;top:607px" width="13" height="8" viewBox="0 0 13 8"><rect x="0" y="0" width="13" height="8" fill="#333"/><path d="M2.5 3.2H7V1.2L10.8 4L7 6.8V4.8H2.5Z" fill="#f4f4f4"/></svg>
<div class="a" style="left:1211px;top:604px;line-height:14px;white-space:pre;color:#1e1e1e;letter-spacing:-0.39px">El archivo  se subió correctamente</div>
<svg class="a" style="left:1192px;top:625px" width="13" height="8" viewBox="0 0 13 8"><rect x="0" y="0" width="13" height="8" fill="#333"/><path d="M2.5 3.2H7V1.2L10.8 4L7 6.8V4.8H2.5Z" fill="#f4f4f4"/></svg>
<div class="a" style="left:1211px;top:622px;line-height:14px;white-space:pre;color:#1e1e1e;letter-spacing:-0.39px">(Exception) Not initialized</div>
<svg class="a" style="left:1192px;top:643px" width="13" height="8" viewBox="0 0 13 8"><rect x="0" y="0" width="13" height="8" fill="#333"/><path d="M2.5 3.2H7V1.2L10.8 4L7 6.8V4.8H2.5Z" fill="#f4f4f4"/></svg>
<div class="a" style="left:1211px;top:640px;line-height:14px;white-space:pre;color:#1e1e1e;letter-spacing:-0.39px">El archivo  se subió correctamente</div>
<svg class="a" style="left:1192px;top:668px" width="13" height="8" viewBox="0 0 13 8"><rect x="0" y="0" width="13" height="8" fill="#333"/><path d="M2.5 3.2H7V1.2L10.8 4L7 6.8V4.8H2.5Z" fill="#f4f4f4"/></svg>
<div class="a" style="left:1211px;top:658px;line-height:14px;white-space:pre;color:#1e1e1e;letter-spacing:-0.39px">Comando ejecutado: 250 File successfully renamed or moved</div>
<svg class="a" style="left:1192px;top:693px" width="13" height="8" viewBox="0 0 13 8"><rect x="0" y="0" width="13" height="8" fill="#333"/><path d="M2.5 3.2H7V1.2L10.8 4L7 6.8V4.8H2.5Z" fill="#f4f4f4"/></svg>
<div class="a" style="left:1211px;top:690px;line-height:14px;white-space:pre;color:#1e1e1e;letter-spacing:-0.39px"> : 250</div>
<svg class="a" style="left:1192px;top:718px" width="13" height="8" viewBox="0 0 13 8"><rect x="0" y="0" width="13" height="8" fill="#333"/><path d="M2.5 3.2H7V1.2L10.8 4L7 6.8V4.8H2.5Z" fill="#f4f4f4"/></svg>
<div class="a" style="left:1211px;top:708px;line-height:14px;white-space:pre;color:#1e1e1e;letter-spacing:-0.39px">Error ejecutando el comando: 503 Need RNFR before RNTO</div>
<svg class="a" style="left:1192px;top:743px" width="13" height="8" viewBox="0 0 13 8"><rect x="0" y="0" width="13" height="8" fill="#333"/><path d="M2.5 3.2H7V1.2L10.8 4L7 6.8V4.8H2.5Z" fill="#f4f4f4"/></svg>
<div class="a" style="left:1211px;top:740px;line-height:14px;white-space:pre;color:#1e1e1e;letter-spacing:-0.39px"> : 503</div>
<svg class="a" style="left:1192px;top:768px" width="13" height="8" viewBox="0 0 13 8"><rect x="0" y="0" width="13" height="8" fill="#333"/><path d="M2.5 3.2H7V1.2L10.8 4L7 6.8V4.8H2.5Z" fill="#f4f4f4"/></svg>
<div class="a" style="left:1211px;top:758px;line-height:14px;white-space:pre;color:#1e1e1e;letter-spacing:-0.39px">Error ejecutando el comando: 503 Need RNFR before RNTO</div>
<svg class="a" style="left:1192px;top:793px" width="13" height="8" viewBox="0 0 13 8"><rect x="0" y="0" width="13" height="8" fill="#333"/><path d="M2.5 3.2H7V1.2L10.8 4L7 6.8V4.8H2.5Z" fill="#f4f4f4"/></svg>
<div class="a" style="left:1211px;top:790px;line-height:14px;white-space:pre;color:#1e1e1e;letter-spacing:-0.39px"> : 503</div>
<svg class="a" style="left:1192px;top:818px" width="13" height="8" viewBox="0 0 13 8"><rect x="0" y="0" width="13" height="8" fill="#333"/><path d="M2.5 3.2H7V1.2L10.8 4L7 6.8V4.8H2.5Z" fill="#f4f4f4"/></svg>
<div class="a" style="left:1211px;top:808px;line-height:14px;white-space:pre;color:#1e1e1e;letter-spacing:-0.39px">Error ejecutando el comando: 503 Need RNFR before RNTO</div>
<svg class="a" style="left:1192px;top:843px" width="13" height="8" viewBox="0 0 13 8"><rect x="0" y="0" width="13" height="8" fill="#333"/><path d="M2.5 3.2H7V1.2L10.8 4L7 6.8V4.8H2.5Z" fill="#f4f4f4"/></svg>
<div class="a" style="left:1211px;top:840px;line-height:14px;white-space:pre;color:#1e1e1e;letter-spacing:-0.39px"> : 503</div>
<svg class="a" style="left:1192px;top:868px" width="13" height="8" viewBox="0 0 13 8"><rect x="0" y="0" width="13" height="8" fill="#333"/><path d="M2.5 3.2H7V1.2L10.8 4L7 6.8V4.8H2.5Z" fill="#f4f4f4"/></svg>
<div class="a" style="left:1211px;top:858px;line-height:14px;white-space:pre;color:#1e1e1e;letter-spacing:-0.39px">Error ejecutando el comando: 503 Need RNFR before RNTO</div>
<svg class="a" style="left:1192px;top:893px" width="13" height="8" viewBox="0 0 13 8"><rect x="0" y="0" width="13" height="8" fill="#333"/><path d="M2.5 3.2H7V1.2L10.8 4L7 6.8V4.8H2.5Z" fill="#f4f4f4"/></svg>
<div class="a" style="left:1211px;top:890px;line-height:14px;white-space:pre;color:#1e1e1e;letter-spacing:-0.39px"> : 503</div>
<div class="a" style="left:1190px;top:909px;line-height:14px;white-space:pre;color:#808080">** Activity (main) Pause, UserClosed = false **</div>
<div class="a" style="left:1190px;top:951px;width:14px;height:14px;border:1px solid #8a8a8a;background:#fff"></div>
<svg class="a" style="left:1192px;top:953px" width="10" height="10" viewBox="0 0 10 10"><path d="M1 5L4 8.5L9 1" fill="none" stroke="#555" stroke-width="1.3"/></svg>
<div class="a" style="left:1208px;top:953px;line-height:14px">Filtrar</div>
<div class="a" style="left:1248px;top:948px;width:54px;height:21px;background:#e1e1e1;border:1px solid #adadad;text-align:center;line-height:20px">Conectar</div>
<div class="a" style="left:1312px;top:948px;width:46px;height:21px;background:#e1e1e1;border:1px solid #adadad;text-align:center;line-height:20px">Limpiar</div>
<div class="a" style="left:1368px;top:948px;width:81px;height:21px;background:#e1e1e1;border:1px solid #adadad;text-align:center;line-height:20px">Lista Permisos</div>
<div class="a" style="left:1490px;top:979px;width:58px;height:21px;background:#fcfcfc;border:1px solid #c8c8c8;border-top:none"></div>
<svg class="a" style="left:1188px;top:984px" width="10" height="10" viewBox="0 0 10 10"><rect x="0" y="0" width="4" height="3.5" fill="#333"/><rect x="6" y="0" width="4" height="3.5" fill="#333"/><rect x="0" y="5.5" width="10" height="4.5" fill="#333"/></svg>
<div class="a" style="left:1206px;top:982px;line-height:14px;color:#333">Módulos</div>
<svg class="a" style="left:1265px;top:982px" width="15" height="13" viewBox="0 0 15 13"><path d="M0.5 1H6.5L7.5 2V12L6.5 11H0.5Z M14.5 1H8.5L7.5 2V12L8.5 11H14.5Z" fill="none" stroke="#333" stroke-width="1"/></svg>
<div class="a" style="left:1287px;top:982px;line-height:14px;color:#333">Administrado...</div>
<svg class="a" style="left:1381px;top:982px" width="14" height="12" viewBox="0 0 14 12"><path d="M0 2H5L6 1H13V11H0Z" fill="#ddb577"/></svg>
<div class="a" style="left:1401px;top:982px;line-height:14px;color:#333">Administrado...</div>
<svg class="a" style="left:1496px;top:982px" width="16" height="14" viewBox="0 0 16 14"><rect x="1" y="0" width="14" height="2" fill="#333"/><rect x="1" y="4" width="10" height="2" fill="#333"/><rect x="1" y="8" width="12" height="2" fill="#333"/><rect x="1" y="12" width="7" height="2" fill="#333"/></svg>
<div class="a" style="left:1517px;top:982px;line-height:14px;color:#0e8a80">Logs</div>
<svg class="a" style="left:1555px;top:982px" width="15" height="14" viewBox="0 0 15 14"><circle cx="9.5" cy="5" r="3.8" fill="none" stroke="#333" stroke-width="1.9"/><path d="M6.8 7.8L1.5 13" stroke="#333" stroke-width="2.2"/></svg>
<div class="a" style="left:1575px;top:982px;line-height:14px;color:#333">Búsqueda R...</div>
<svg class="a" style="left:1660px;top:983px" width="13" height="13" viewBox="0 0 13 13"><rect x="2" y="0" width="5" height="4" fill="#333"/><rect x="8" y="0" width="4" height="4" fill="#333"/><circle cx="4.5" cy="8" r="2.5" fill="none" stroke="#1a5fa8" stroke-width="1.3"/><path d="M2.7 9.8L0.5 12" stroke="#1a5fa8" stroke-width="1.4"/></svg>
<div class="a" style="left:1680px;top:982px;line-height:14px;color:#333">Encontrar todas...</div>
<div class="a" style="left:1px;top:1006px;width:1785px;height:1px;background:#c8c8c8"></div>
<div class="a" style="left:1px;top:1007px;width:1785px;height:22px;background:#f8f8f8"></div>
<svg class="a" style="left:12.5px;top:1013.5px" width="13" height="7.5" viewBox="0 0 15 8" preserveAspectRatio="none"><path d="M3.2 6.8A2.5 2.5 0 0 1 3.2 1.9H7.6L9.3 3.6 M11.4 1.9A2.5 2.5 0 0 1 11.4 6.8H7.2L5.4 5" fill="none" stroke="#333" stroke-width="1.8"/></svg>
<div class="a" style="left:47px;top:1012px;line-height:14px;color:#505050;">B4A-Bridge: Conectado</div>
<div class="a" style="left:191px;top:1012px;line-height:14px;color:#505050;">4/27/2021 10:10:11 PM</div>
<div class="a" style="left:318px;top:1012px;line-height:14px;color:#505050;">Archivo Guardado.</div>
<div class="a" style="left:437px;top:1012px;line-height:14px;color:#505050;font-weight:bold;text-decoration:underline;">B4A v10.7 is available for download</div>
</body></html>
